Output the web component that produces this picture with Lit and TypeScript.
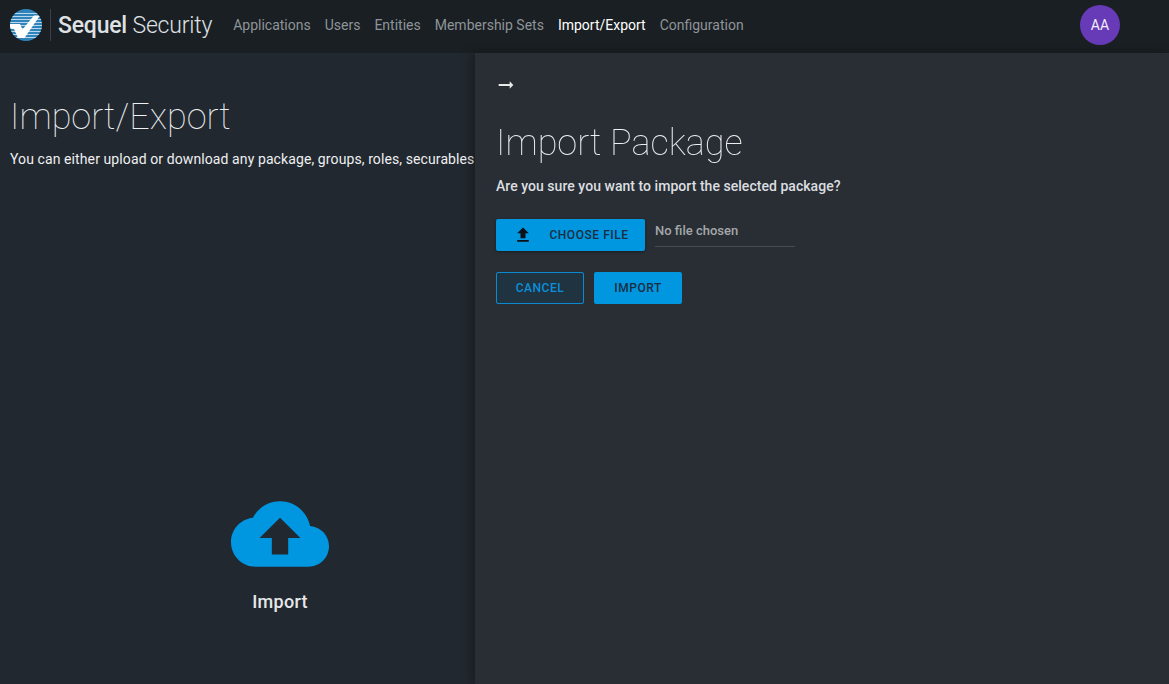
import { LitElement, html, css, svg } from "lit";
import { customElement } from "lit/decorators.js";

const stripes = [13, 16, 19, 22, 25, 28, 31, 34, 37];

@customElement("app-root")
export class AppRoot extends LitElement {
  static styles = css`
    :host {
      display: block;
      position: relative;
      width: 1169px;
      height: 684px;
      overflow: hidden;
      background: #22282f;
      font-family: Roboto, "Liberation Sans", sans-serif;
      color: #e8eaec;
    }
    .bar {
      display: flex;
      align-items: center;
      height: 53px;
      padding: 0 0 3px 10px;
      box-sizing: border-box;
      background: #1a1f23;
    }
    .logo { width: 32px; height: 32px; display: block; }
    .rule { width: 1px; height: 32px; margin: 0 7px 0 8px; background: #3a4045; }
    .brand { font-size: 23px; font-weight: 300; color: #dfe1e3; letter-spacing: -0.2px; white-space: nowrap; }
    .brand b { font-weight: 500; }
    nav { display: flex; gap: 14px; margin-left: 21px; font-size: 14px; color: #8e9499; }
    nav .on { color: #fff; }
    .avatar {
      position: absolute;
      left: 1080px;
      top: 5px;
      width: 40px;
      height: 40px;
      border-radius: 50%;
      background: #673ab7;
      color: #f2eefa;
      font-size: 14px;
      display: flex;
      align-items: center;
      justify-content: center;
    }
    main { width: 560px; padding: 42px 10px 0; box-sizing: border-box; }
    h1 { margin: 0; font-size: 36px; line-height: 44px; font-weight: 100; color: #eef1f3; }
    .lead { margin: 10px 0 0; font-size: 14px; line-height: 20px; letter-spacing: 0.1px; white-space: nowrap; color: #eef0f2; }
    .tile { display: flex; flex-direction: column; align-items: center; margin-top: 316px; }
    .cloud { width: 98px; height: 98px; display: block; fill: #0096e0; }
    .tile span { margin-top: 7px; font-size: 18px; line-height: 24px; font-weight: 500; letter-spacing: 0.3px; color: #e6e8ea; }
    .drawer {
      position: absolute;
      left: 475px;
      top: 53px;
      right: 0;
      bottom: 0;
      padding: 21px 21px 0;
      background: #282e34;
      box-shadow: -4px 0 10px rgba(0, 0, 0, 0.28);
    }
    .back { display: block; width: 22px; height: 22px; margin-left: -1px; fill: #e6e8ea; }
    h2 { margin: 25px 0 0; font-size: 36px; line-height: 44px; font-weight: 100; color: #eceef0; will-change: opacity; }
    .ask { margin: 11px 0 0; font-size: 14px; line-height: 20px; font-weight: 500; letter-spacing: 0.04px; color: #dcdee0; }
    .file { display: flex; gap: 10px; margin-top: 23px; }
    button {
      height: 32px;
      border: 0;
      border-radius: 2px;
      padding: 0;
      font: 500 12px Roboto, sans-serif;
      letter-spacing: 0.55px;
      text-transform: uppercase;
      background: #0096e0;
      color: #1c2e3f;
      display: flex;
      align-items: center;
      justify-content: center;
    }
    .choose { width: 149px; gap: 16px; padding-left: 1px; box-shadow: 0 1px 3px rgba(0, 0, 0, 0.35); }
    .choose svg { width: 20px; height: 20px; fill: #0b1116; }
    .field {
      width: 140px;
      height: 28px;
      box-sizing: border-box;
      border-bottom: 1px solid #474c52;
      font-size: 13px;
      line-height: 24px;
      font-weight: 500;
      color: #a4a7aa;
    }
    .actions { display: flex; gap: 10px; margin-top: 21px; }
    .actions button { width: 88px; }
    .ghost { background: #1f3340; border: 1px solid #0b8ad0; color: #0a90dc; }
  `;

  render() {
    return html`
      <header class="bar">
        <svg class="logo" viewBox="0 0 32 32" aria-hidden="true">
          <defs><clipPath id="disc"><circle cx="16" cy="16" r="16"></circle></clipPath></defs>
          <g clip-path="url(#disc)">
            <rect width="32" height="32" fill="#2f83bb"></rect>
            ${stripes.map((y) => svg`<rect x="0" y="${y - 9}" width="32" height="1" fill="#b9d6ea"></rect>`)}
            <path d="M0 15 L10 15 L12.5 20.5 L24 6.5 L30 6.5 L14.5 29 L8 29 L4 20 L0 19 Z" fill="#fff"></path>
          </g>
        </svg>
        <div class="rule"></div>
        <div class="brand"><b>Sequel</b> Security</div>
        <nav>
          <span>Applications</span><span>Users</span><span>Entities</span><span>Membership Sets</span>
          <span class="on">Import/Export</span><span>Configuration</span>
        </nav>
      </header>
      <div class="avatar">AA</div>
      <main>
        <h1>Import/Export</h1>
        <p class="lead">You can either upload or download any package, groups, roles, securables</p>
        <div class="tile">
          <svg class="cloud" viewBox="0 0 24 24" aria-hidden="true">
            <path d="M19.35 10.04C18.67 6.59 15.64 4 12 4 9.11 4 6.6 5.64 5.35 8.04 2.34 8.36 0 10.91 0 14c0 3.31 2.69 6 6 6h13c2.76 0 5-2.24 5-5 0-2.64-2.05-4.78-4.65-4.96zM14 13v4h-4v-4H7l5-5 5 5h-3z"></path>
          </svg>
          <span>Import</span>
        </div>
      </main>
      <section class="drawer">
        <svg class="back" viewBox="0 0 24 24" aria-hidden="true"><path d="M16.01 11H4v2h12.01v3L20 12l-3.99-4z"></path></svg>
        <h2>Import Package</h2>
        <p class="ask">Are you sure you want to import the selected package?</p>
        <div class="file">
          <button class="choose">
            <svg viewBox="0 0 24 24" aria-hidden="true"><path d="M9 16h6v-6h4l-7-7-7 7h4zm-4 2h14v2H5z"></path></svg>
            Choose file
          </button>
          <div class="field">No file chosen</div>
        </div>
        <div class="actions">
          <button class="ghost">Cancel</button>
          <button>Import</button>
        </div>
      </section>
    `;
  }
}
